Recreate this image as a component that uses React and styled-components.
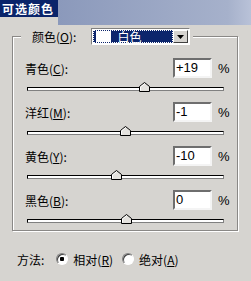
import React from "react";
import styled, { createGlobalStyle } from "styled-components";

const GlobalStyle = createGlobalStyle`
  html, body {
    margin: 0;
    padding: 0;
    background: #d6d4d0;
  }
  body {
    font-family: "Noto Sans CJK SC", "Liberation Sans", sans-serif;
    font-size: 12px;
    color: #000;
  }
`;

const channels = [
  { name: "青色", key: "C", value: "+19", num: 19 },
  { name: "洋红", key: "M", value: "-1", num: -1 },
  { name: "黄色", key: "Y", value: "-10", num: -10 },
  { name: "黑色", key: "B", value: "0", num: 0 },
];

export default function App() {
  return (
    <>
      <GlobalStyle />
      <Window>
        <TopBar>
          <Title>可选颜色</Title>
          <Backdrop />
        </TopBar>

        <Group>
          <Legend>
            <LegendInner>
              <span>
                颜色(<u>O</u>):
              </span>
              <Select>
                <SelectValue>
                  <Swatch />
                  白色
                </SelectValue>
                <ArrowButton>
                  <svg width="7" height="4" viewBox="0 0 7 4">
                    <path d="M0 0h7L3.5 4z" fill="#000" />
                  </svg>
                </ArrowButton>
              </Select>
            </LegendInner>
          </Legend>

          <Rows>
            {channels.map((c) => (
              <Row key={c.key}>
                <Header>
                  <Label>
                    {c.name}(<u>{c.key}</u>):
                  </Label>
                  <NumberBox>{c.value}</NumberBox>
                  <Percent>%</Percent>
                </Header>
                <Track>
                  <Thumb style={{ left: `${50 + c.num / 2}%` }}>
                    <svg width="11" height="10" viewBox="0 0 11 10">
                      <path
                        d="M0.5 9.5V4.5L5.5 0.5L10.5 4.5V9.5Z"
                        fill="#e4e2de"
                        stroke="#000"
                      />
                      <path d="M1.5 8.5V5L5.5 1.8" fill="none" stroke="#fff" />
                    </svg>
                  </Thumb>
                </Track>
              </Row>
            ))}
          </Rows>
        </Group>

        <MethodRow>
          <span>方法:</span>
          <Radio checked />
          <RadioText>
            相对(<u>R</u>)
          </RadioText>
          <Radio />
          <RadioText>
            绝对(<u>A</u>)
          </RadioText>
        </MethodRow>
      </Window>
    </>
  );
}

const Window = styled.div`
  width: 251px;
  height: 281px;
  background: #d6d4d0;
  overflow: hidden;
  display: flex;
  flex-direction: column;
`;

const TopBar = styled.div`
  display: flex;
  height: 25px;
  flex-shrink: 0;
`;

const Title = styled.div`
  min-width: 58px;
  height: 17px;
  background: #0a246a;
  color: #fff;
  font-weight: bold;
  font-size: 12px;
  line-height: 17px;
  padding: 0 4px 0 2px;
  box-sizing: border-box;
  white-space: nowrap;
  letter-spacing: 1px;
`;

const Backdrop = styled.div`
  flex: 1;
  background: linear-gradient(90deg, #8b99bb, #a6b1cb 88%, #b9c2d8);
`;

const Group = styled.fieldset`
  margin: 3px 0 0 12px;
  width: 226px;
  box-sizing: border-box;
  padding: 0 0 7px 0;
  border: 1px solid #8a8886;
  box-shadow: inset 1px 1px 0 #fff, 1px 1px 0 #fff;
  min-inline-size: 0;
`;

const Legend = styled.legend`
  margin-left: 8px;
  padding: 0 3px 0 11px;
  background: #d6d4d0;
`;

const LegendInner = styled.div`
  display: flex;
  align-items: center;
  gap: 15px;
  height: 17px;
`;

const Select = styled.div`
  display: flex;
  width: 99px;
  height: 17px;
  box-sizing: border-box;
  border: 1px solid;
  border-color: #808080 #fff #fff #808080;
  background: #fff;
  padding: 1px;
`;

const SelectValue = styled.div`
  flex: 1;
  display: flex;
  align-items: center;
  gap: 6px;
  padding-left: 3px;
  background: #0c256c;
  outline: 1px dotted #fff;
  outline-offset: -1px;
  color: #fff;
  line-height: 13px;
`;

const Swatch = styled.span`
  width: 15px;
  height: 11px;
  background: #fff;
`;

const ArrowButton = styled.div`
  width: 15px;
  display: flex;
  align-items: center;
  justify-content: center;
  box-sizing: border-box;
  background: #d6d4d0;
  border: 1px solid;
  border-color: #fff #404040 #404040 #fff;
`;

const Rows = styled.div`
  padding: 13px 7px 0 12px;
`;

const Row = styled.div`
  display: flex;
  flex-direction: column;

  &:last-child > div:last-child {
    margin-bottom: 0;
  }
`;

const Header = styled.div`
  display: flex;
  align-items: center;
  height: 20px;
`;

const Label = styled.span`
  flex: 1;
`;

const NumberBox = styled.div`
  width: 39px;
  height: 20px;
  box-sizing: border-box;
  border: 2px solid;
  border-color: #6e6e6e #f4f4f4 #f4f4f4 #6e6e6e;
  background: #fff;
  font-family: "Liberation Sans", sans-serif;
  font-size: 13px;
  line-height: 16px;
  padding-left: 1px;
`;

const Percent = styled.span`
  width: 12px;
  margin-left: 6px;
  font-family: "Liberation Sans", sans-serif;
  font-size: 13px;
`;

const Track = styled.div`
  position: relative;
  width: 197px;
  height: 4px;
  box-sizing: border-box;
  margin: 9px 0 11px 2px;
  background: #fff;
  border: 1px solid;
  border-color: #000 #808080 #808080 #000;
`;

const Thumb = styled.div`
  position: absolute;
  top: -6px;
  width: 11px;
  height: 10px;
  margin-left: -5px;
  line-height: 0;
`;

const MethodRow = styled.div`
  display: flex;
  align-items: center;
  height: 16px;
  margin-top: 20px;
  padding-left: 17px;
`;

const Radio = styled.span`
  width: 12px;
  height: 12px;
  box-sizing: border-box;
  border-radius: 50%;
  margin-left: ${(p) => (p.checked ? "12px" : "9px")};
  border: 1px solid;
  border-color: #808080 #fff #fff #808080;
  background: ${(p) =>
    p.checked
      ? "radial-gradient(circle, #000 0 2px, #fff 2.5px)"
      : "#fff"};
  box-shadow: inset 1px 1px 0 #404040;
`;

const RadioText = styled.span`
  margin-left: 5px;
`;
